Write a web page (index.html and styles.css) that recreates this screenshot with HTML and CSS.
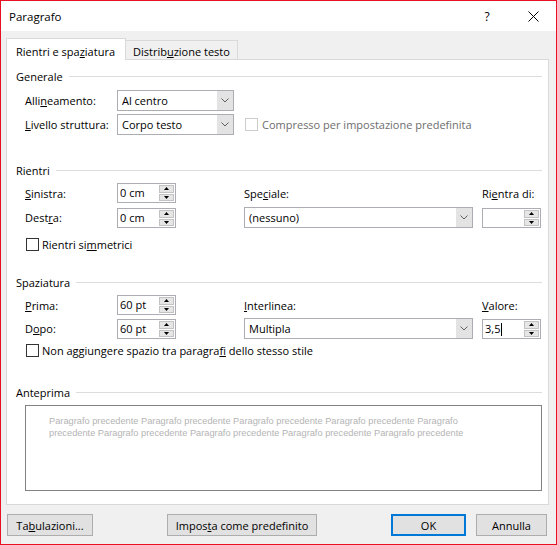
FILE: index.html
```html
<!DOCTYPE html>
<html lang="it">
<head>
<meta charset="utf-8">
<title>Paragrafo</title>
<link rel="stylesheet" href="styles.css">
</head>
<body>
<div class="dialog">
  <div class="titlebar">
    <span class="title">Paragrafo</span>
    <span class="tbtn help">?</span>
    <span class="tbtn close"><svg width="11" height="11" viewBox="0 0 11 11"><path d="M0.5 0.5 L10.5 10.5 M10.5 0.5 L0.5 10.5" stroke="#000" stroke-width="1" fill="none"/></svg></span>
  </div>

  <div class="tabs">
    <div class="tab active">Rientri e spa<u>z</u>iatura</div>
    <div class="tab">Distrib<u>u</u>zione testo</div>
  </div>

  <div class="panel">
    <div class="section-head"><span>Generale</span></div>
    <div class="grow first">
      <span class="lbl">Alli<u>n</u>eamento:</span>
      <div class="select small"><span class="val">Al centro</span><span class="drop"><svg width="8" height="5" viewBox="0 0 8 5"><path d="M0.5 0.5 L4 4 L7.5 0.5" stroke="#606060" fill="none"/></svg></span></div>
    </div>
    <div class="grow">
      <span class="lbl"><u>L</u>ivello struttura:</span>
      <div class="select small"><span class="val">Corpo testo</span><span class="drop"><svg width="8" height="5" viewBox="0 0 8 5"><path d="M0.5 0.5 L4 4 L7.5 0.5" stroke="#606060" fill="none"/></svg></span></div>
      <span class="check disabled"><span class="box"></span><span class="ctext">Compresso per impostazione predefinita</span></span>
    </div>

    <div class="section-head sec2"><span>Rientri</span></div>
    <div class="grid">
      <span class="lbl"><u>S</u>inistra:</span>
      <div class="spin"><span class="val">0 cm</span><span class="arrows"><span class="ab"><svg width="5" height="3" viewBox="0 0 5 3"><path d="M2.5 0 L5 3 L0 3 Z" fill="#000"/></svg></span><span class="ab"><svg width="5" height="3" viewBox="0 0 5 3"><path d="M0 0 L5 0 L2.5 3 Z" fill="#000"/></svg></span></span></div>
      <span class="lbl">Spe<u>c</u>iale:</span>
      <span class="lbl">Ri<u>e</u>ntra di:</span>

      <span class="lbl">Dest<u>r</u>a:</span>
      <div class="spin low"><span class="val">0 cm</span><span class="arrows"><span class="ab"><svg width="5" height="3" viewBox="0 0 5 3"><path d="M2.5 0 L5 3 L0 3 Z" fill="#000"/></svg></span><span class="ab"><svg width="5" height="3" viewBox="0 0 5 3"><path d="M0 0 L5 0 L2.5 3 Z" fill="#000"/></svg></span></span></div>
      <div class="select wide"><span class="val">(nessuno)</span><span class="drop"><svg width="8" height="5" viewBox="0 0 8 5"><path d="M0.5 0.5 L4 4 L7.5 0.5" stroke="#606060" fill="none"/></svg></span></div>
      <div class="spin low"><span class="val"></span><span class="arrows"><span class="ab"><svg width="5" height="3" viewBox="0 0 5 3"><path d="M2.5 0 L5 3 L0 3 Z" fill="#000"/></svg></span><span class="ab"><svg width="5" height="3" viewBox="0 0 5 3"><path d="M0 0 L5 0 L2.5 3 Z" fill="#000"/></svg></span></span></div>
    </div>
    <div class="check crow"><span class="box"></span><span class="ctext">Rientri si<u>m</u>metrici</span></div>

    <div class="section-head sec3"><span>Spaziatura</span></div>
    <div class="grid">
      <span class="lbl"><u>P</u>rima:</span>
      <div class="spin"><span class="val">60 pt</span><span class="arrows"><span class="ab"><svg width="5" height="3" viewBox="0 0 5 3"><path d="M2.5 0 L5 3 L0 3 Z" fill="#000"/></svg></span><span class="ab"><svg width="5" height="3" viewBox="0 0 5 3"><path d="M0 0 L5 0 L2.5 3 Z" fill="#000"/></svg></span></span></div>
      <span class="lbl"><u>I</u>nterlinea:</span>
      <span class="lbl"><u>V</u>alore:</span>

      <span class="lbl">D<u>o</u>po:</span>
      <div class="spin low"><span class="val">60 pt</span><span class="arrows"><span class="ab"><svg width="5" height="3" viewBox="0 0 5 3"><path d="M2.5 0 L5 3 L0 3 Z" fill="#000"/></svg></span><span class="ab"><svg width="5" height="3" viewBox="0 0 5 3"><path d="M0 0 L5 0 L2.5 3 Z" fill="#000"/></svg></span></span></div>
      <div class="select wide"><span class="val">Multipla</span><span class="drop"><svg width="8" height="5" viewBox="0 0 8 5"><path d="M0.5 0.5 L4 4 L7.5 0.5" stroke="#606060" fill="none"/></svg></span></div>
      <div class="spin low"><span class="val">3,5<span class="caret"></span></span><span class="arrows"><span class="ab"><svg width="5" height="3" viewBox="0 0 5 3"><path d="M2.5 0 L5 3 L0 3 Z" fill="#000"/></svg></span><span class="ab"><svg width="5" height="3" viewBox="0 0 5 3"><path d="M0 0 L5 0 L2.5 3 Z" fill="#000"/></svg></span></span></div>
    </div>
    <div class="check crow2"><span class="box"></span><span class="ctext">Non aggiungere spazio tra paragra<u>f</u>i dello stesso stile</span></div>

    <div class="section-head sec4"><span>Anteprima</span></div>
    <div class="preview">
      <p class="ptext">Paragrafo precedente Paragrafo precedente Paragrafo precedente Paragrafo precedente Paragrafo precedente Paragrafo precedente Paragrafo precedente Paragrafo precedente Paragrafo precedente</p>
    </div>
  </div>

  <div class="footer">
    <span class="btn b-tab">Ta<u>b</u>ulazioni...</span>
    <span class="btn b-def">Impos<u>t</u>a come predefinito</span>
    <span class="btn b-ok">OK</span>
    <span class="btn b-cancel">Annulla</span>
  </div>
</div>
</body>
</html>
```

FILE: styles.css
```css
* { box-sizing: border-box; }
html, body { margin: 0; padding: 0; }
body {
  font-family: "Open Sans", "Segoe UI", sans-serif;
  font-size: 11px;
  color: #000;
  background: #fff;
}
u { text-underline-offset: 1px; }

.dialog {
  width: 557px;
  height: 545px;
  border: 1px solid #e81123;
  background: #f0f0f0;
  display: flex;
  flex-direction: column;
}

.titlebar {
  flex: none;
  height: 30px;
  background: #fff;
  display: flex;
  align-items: center;
}
.title {
  flex: 1;
  padding-left: 8px;
  font-size: 11.5px;
}
.tbtn {
  width: 46px;
  height: 30px;
  display: flex;
  align-items: center;
  justify-content: center;
}
.help { font-size: 12px; }

.tabs {
  flex: none;
  height: 28px;
  padding: 7px 0 0 5px;
  display: flex;
  align-items: flex-end;
}
.tab {
  height: 19px;
  width: 112px;
  padding: 2px 0 0 7px;
  border-top: 1px solid #d9d9d9;
  border-right: 1px solid #d9d9d9;
  background: #f0f0f0;
  display: flex;
  align-items: center;
}
.tab.active {
  height: 22px;
  width: 120px;
  margin-bottom: -1px;
  padding: 3px 0 0 9px;
  border-left: 1px solid #d9d9d9;
  background: #fff;
  position: relative;
  z-index: 1;
}

.panel {
  flex: none;
  height: 446px;
  margin: 0 7px 0 5px;
  border: 1px solid #d9d9d9;
  background: #fff;
  padding: 8px 6px 0 9px;
}

.section-head {
  height: 16px;
  display: flex;
  align-items: center;
}
.section-head::after {
  content: "";
  flex: 1;
  height: 1px;
  background: #dcdcdc;
  margin-left: 6px;
}
.sec2 { margin-top: 27px; }
.sec3 { margin-top: 22px; }
.sec4 { margin-top: 26px; }

.grow {
  display: flex;
  align-items: center;
  height: 21px;
  margin-top: 3px;
  padding-left: 9px;
}
.grow.first { margin-top: 6px; }
.grow .lbl { width: 92px; flex: none; }

.select {
  display: flex;
  height: 21px;
  border: 1px solid #abadb3;
  background: #fff;
}
.select .val {
  flex: 1;
  padding-left: 4px;
  line-height: 19px;
  white-space: nowrap;
}
.select .drop {
  width: 16px;
  background: #e3e3e3;
  display: flex;
  align-items: center;
  justify-content: center;
}
.select.small { width: 117px; }
.select.wide { width: 229px; }

.spin {
  display: flex;
  width: 59px;
  height: 20px;
  border: 1px solid #abadb3;
  background: #fff;
}
.spin .val {
  flex: 1;
  padding-left: 2px;
  line-height: 18px;
  white-space: nowrap;
  display: flex;
  align-items: center;
}
.spin .arrows {
  width: 16px;
  display: flex;
  flex-direction: column;
  padding: 1px 1px 1px 0;
  gap: 1px;
}
.spin .ab {
  flex: 1;
  background: #e6e6e6;
  border: 1px solid #c2c2c2;
  display: flex;
  align-items: center;
  justify-content: center;
}
.caret {
  display: inline-block;
  width: 1px;
  height: 13px;
  background: #000;
  margin-left: 1px;
}

.grid {
  display: grid;
  grid-template-columns: 92px 127px 238px 59px;
  grid-template-rows: 20px 21px;
  row-gap: 4px;
  margin-top: 5px;
  padding-left: 9px;
  align-items: center;
}
.grid .low { align-self: end; }
.sec3 + .grid { row-gap: 3px; }

.check {
  display: flex;
  align-items: center;
  height: 16px;
}
.check .box {
  width: 13px;
  height: 13px;
  border: 1px solid #333;
  background: #fff;
  flex: none;
  margin-right: 3px;
}
.check.disabled { margin-left: 11px; color: #6d6d6d; }
.check.disabled .box { border-color: #cccccc; margin-right: 4px; }
.crow { margin-top: 8px; padding-left: 10px; }
.crow2 { margin-top: 3px; padding-left: 10px; }

.preview {
  margin: 5px 0 0 9px;
  height: 86px;
  border: 1px solid #828282;
  padding: 9px 0 0 23px;
}
.ptext {
  margin: 0;
  width: 440px;
  font-family: "Liberation Sans", Arial, sans-serif;
  font-size: 9.25px;
  line-height: 12px;
  color: #b4b4b4;
}

.footer {
  flex: none;
  display: flex;
  padding: 9px 9px 0 6px;
}
.btn {
  height: 22px;
  border: 1px solid #adadad;
  background: #e1e1e1;
  display: flex;
  align-items: center;
  justify-content: center;
  white-space: nowrap;
}
.b-tab { width: 86px; }
.b-def { width: 150px; margin-left: 74px; }
.b-ok {
  width: 75px;
  margin-left: auto;
  border-color: #0078d7;
  box-shadow: inset 0 0 0 1px #0078d7;
}
.b-cancel { width: 71px; margin-left: 10px; }
```
